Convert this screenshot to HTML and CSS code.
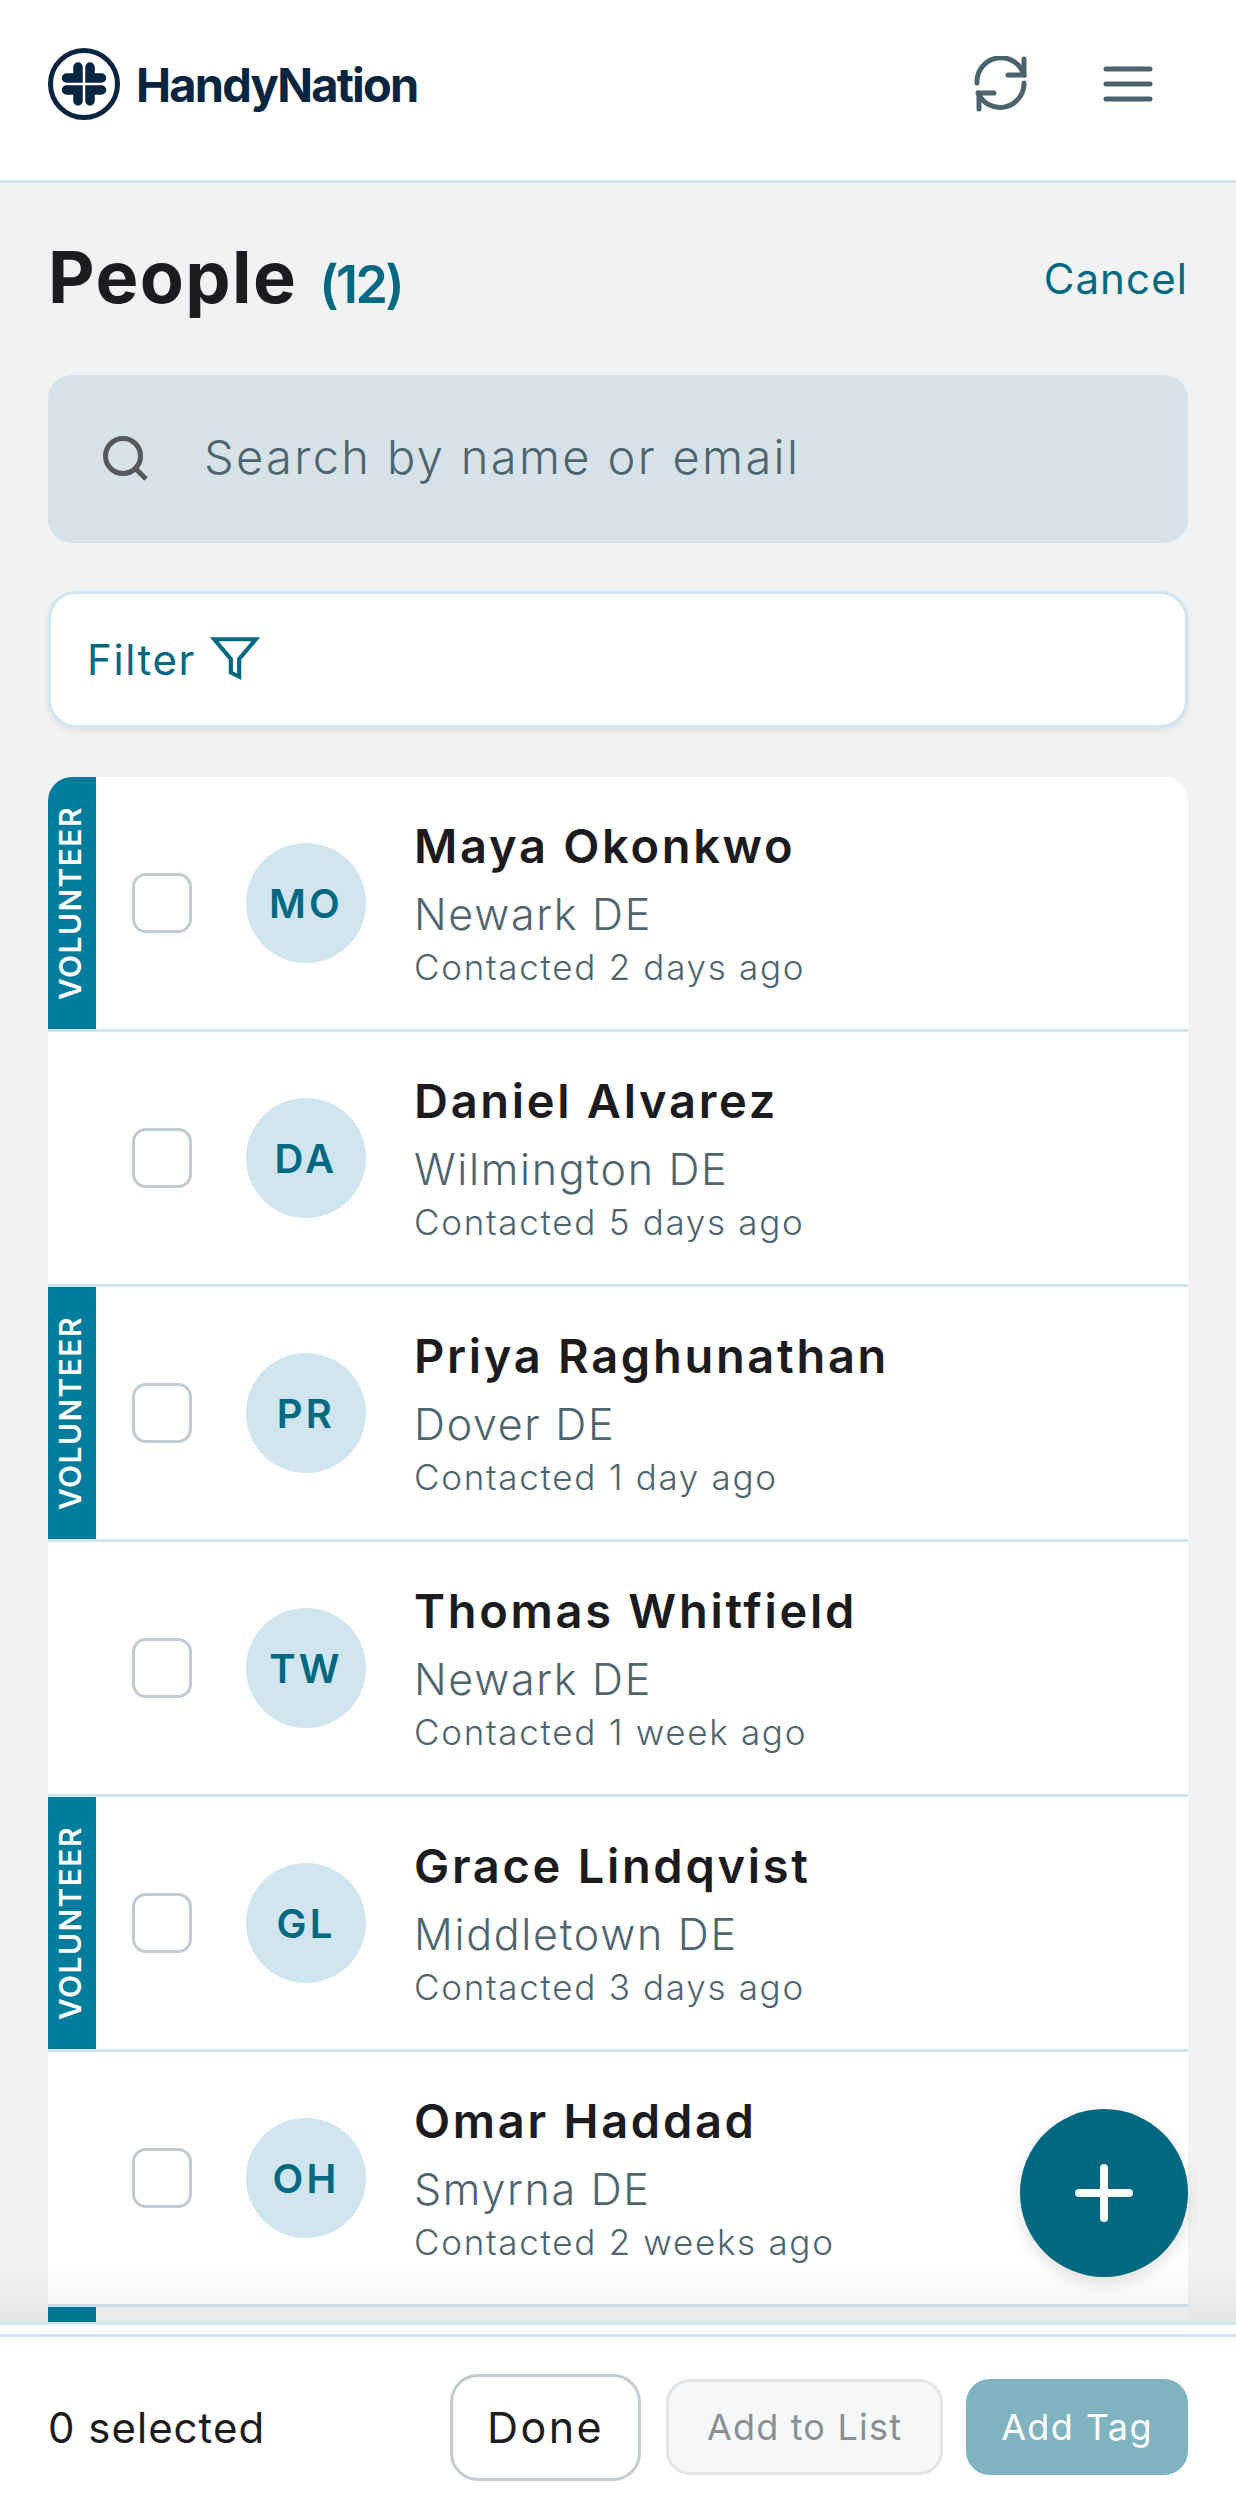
FILE: index.html
```html
<!DOCTYPE html>
<html lang="en">
<head>
    <meta charset="UTF-8">
    <meta name="viewport" content="width=device-width, initial-scale=1.0">
    <title>People - HandyNation</title>
    <link rel="stylesheet" href="styles.css">
</head>
<body>
    <header class="topbar">
        <div class="brand">
            <svg class="brand-mark" viewBox="0 0 72 72" fill="none" stroke="#0a2540">
                <circle cx="36" cy="36" r="33.5" stroke-width="5"/>
                <g stroke-width="9.5" stroke-linecap="round">
                    <path d="M18.5 30H30V19"/>
                    <path d="M53.5 30H42V19"/>
                    <path d="M18.5 42H30V53"/>
                    <path d="M53.5 42H42V53"/>
                </g>
            </svg>
            <span class="brand-name">HandyNation</span>
        </div>
        <div class="topbar-actions">
            <svg class="icon-refresh" viewBox="0 0 56 56" fill="none" stroke="#4c636e" stroke-width="5" stroke-linecap="round">
                <path d="M3 27A24 24 0 0 1 50 19"/>
                <path d="M50 3V19H34"/>
                <path d="M50 27A24 24 0 0 1 4 37"/>
                <path d="M5 53V37H20"/>
            </svg>
            <svg class="icon-menu" viewBox="0 0 50 36" fill="none" stroke="#4c636e" stroke-width="5" stroke-linecap="round">
                <path d="M3 3H47M3 18H47M3 33H47"/>
            </svg>
        </div>
    </header>

    <main class="content">
        <div class="title-row">
            <h1>People</h1>
            <span class="count">(12)</span>
            <a class="cancel">Cancel</a>
        </div>

        <div class="search">
            <svg class="icon-search" viewBox="0 0 46 46" fill="none" stroke="#55595c" stroke-width="5">
                <circle cx="20" cy="20" r="17.5"/>
                <path d="M32 32L43 43"/>
            </svg>
            <span class="search-text">Search by name or email</span>
        </div>

        <div class="filter">
            <span>Filter</span>
            <svg class="icon-filter" viewBox="0 0 24 24" fill="none" stroke="#006880" stroke-width="2">
                <polygon points="22 3 2 3 10 12.46 10 19 14 21 14 12.46 22 3"/>
            </svg>
        </div>

        <div class="list">
            <div class="row">
                <div class="tag">VOLUNTEER</div>
                <div class="check"></div>
                <div class="avatar">MO</div>
                <div class="info">
                    <div class="name">Maya Okonkwo</div>
                    <div class="city">Newark DE</div>
                    <div class="contacted">Contacted 2 days ago</div>
                </div>
            </div>
            <div class="row">
                <div class="tag tag-none"></div>
                <div class="check"></div>
                <div class="avatar">DA</div>
                <div class="info">
                    <div class="name">Daniel Alvarez</div>
                    <div class="city">Wilmington DE</div>
                    <div class="contacted">Contacted 5 days ago</div>
                </div>
            </div>
            <div class="row">
                <div class="tag">VOLUNTEER</div>
                <div class="check"></div>
                <div class="avatar">PR</div>
                <div class="info">
                    <div class="name">Priya Raghunathan</div>
                    <div class="city">Dover DE</div>
                    <div class="contacted">Contacted 1 day ago</div>
                </div>
            </div>
            <div class="row">
                <div class="tag tag-none"></div>
                <div class="check"></div>
                <div class="avatar">TW</div>
                <div class="info">
                    <div class="name">Thomas Whitfield</div>
                    <div class="city">Newark DE</div>
                    <div class="contacted">Contacted 1 week ago</div>
                </div>
            </div>
            <div class="row">
                <div class="tag">VOLUNTEER</div>
                <div class="check"></div>
                <div class="avatar">GL</div>
                <div class="info">
                    <div class="name">Grace Lindqvist</div>
                    <div class="city">Middletown DE</div>
                    <div class="contacted">Contacted 3 days ago</div>
                </div>
            </div>
            <div class="row">
                <div class="tag tag-none"></div>
                <div class="check"></div>
                <div class="avatar">OH</div>
                <div class="info">
                    <div class="name">Omar Haddad</div>
                    <div class="city">Smyrna DE</div>
                    <div class="contacted">Contacted 2 weeks ago</div>
                </div>
            </div>
            <div class="row row-next">
                <div class="tag"></div>
            </div>
        </div>

        <div class="fade"></div>
        <button class="fab">
            <svg viewBox="0 0 58 58" fill="none" stroke="#fff" stroke-width="8" stroke-linecap="round">
                <path d="M29 4V54M4 29H54"/>
            </svg>
        </button>
    </main>

    <footer class="bottombar">
        <div class="bottombar-inner">
            <span class="selected">0 selected</span>
            <div class="bottombar-actions">
                <button class="btn btn-done">Done</button>
                <button class="btn btn-list">Add to List</button>
                <button class="btn btn-tag">Add Tag</button>
            </div>
        </div>
    </footer>
</body>
</html>
```

FILE: styles.css
```css
* {
    box-sizing: border-box;
}
html, body {
    height: 100%;
}
body {
    margin: 0;
    display: flex;
    flex-direction: column;
    overflow: hidden;
    font-family: Inter, "Noto Sans", sans-serif;
    background-color: #f0f2f4;
    color: #1c1c20;
}
.topbar {
    flex: none;
    height: 183px;
    display: flex;
    align-items: center;
    justify-content: space-between;
    padding: 0 83px 12px 48px;
    background-color: white;
    border-bottom: 3px solid #d0e5f0;
}
.brand {
    display: flex;
    align-items: center;
    gap: 16px;
}
.brand-mark {
    width: 72px;
    height: 72px;
}
.brand-name {
    font-size: 47px;
    font-weight: 700;
    letter-spacing: -1.8px;
    color: #0a2540;
}
.topbar-actions {
    display: flex;
    align-items: center;
    gap: 73px;
}
.icon-refresh {
    width: 56px;
    height: 56px;
    display: block;
}
.icon-menu {
    width: 50px;
    height: 36px;
    display: block;
}
.content {
    position: relative;
    flex: 1;
    min-height: 0;
    overflow: hidden;
    padding: 0 48px;
}
.title-row {
    height: 192px;
    display: flex;
    align-items: baseline;
    padding-top: 52px;
}
h1 {
    margin: 0;
    font-size: 72px;
    line-height: 84px;
    font-weight: 700;
    letter-spacing: 1.4px;
}
.count {
    margin-left: 22px;
    font-size: 52px;
    font-weight: 600;
    letter-spacing: -2.6px;
    color: #006880;
}
.cancel {
    align-self: flex-start;
    margin-left: auto;
    margin-top: 18px;
    font-size: 42px;
    letter-spacing: 1.1px;
    color: #006880;
}
.search {
    height: 168px;
    display: flex;
    align-items: center;
    padding-left: 55px;
    background-color: #d6e2e7;
    border-radius: 24px;
}
.icon-search {
    width: 46px;
    height: 46px;
}
.search-text {
    margin-left: 55px;
    padding-bottom: 5px;
    font-size: 47px;
    font-weight: 300;
    letter-spacing: 2.35px;
    color: #4e6570;
}
.filter {
    height: 137px;
    margin-top: 48px;
    display: flex;
    align-items: center;
    gap: 14px;
    padding-left: 36px;
    font-size: 42px;
    letter-spacing: 1.6px;
    color: #006880;
    background-color: white;
    border: 3px solid #d0e5f0;
    border-radius: 28px;
    box-shadow: 0 3px 6px rgba(0,0,0,0.08);
}
.icon-filter {
    width: 50px;
    height: 50px;
    margin-top: -3px;
}
.list {
    margin-top: 49px;
    background-color: white;
    border-radius: 24px 24px 0 0;
    overflow: hidden;
}
.row {
    height: 255px;
    display: flex;
    align-items: center;
    border-bottom: 3px solid #d0e4ef;
}
.row-next {
    background-color: #f4f5f6;
}
.tag {
    width: 48px;
    height: 100%;
    flex: none;
    display: flex;
    align-items: center;
    justify-content: center;
    padding-left: 4px;
    writing-mode: vertical-rl;
    transform: rotate(180deg);
    font-size: 30px;
    font-weight: 600;
    letter-spacing: 1.4px;
    color: white;
    background-color: #007c9c;
}
.tag-none {
    background-color: transparent;
}
.check {
    width: 60px;
    height: 60px;
    flex: none;
    margin-left: 36px;
    border: 3px solid #c0ccd3;
    border-radius: 14px;
}
.avatar {
    width: 120px;
    height: 120px;
    flex: none;
    margin-left: 54px;
    display: flex;
    align-items: center;
    justify-content: center;
    font-size: 40px;
    font-weight: 600;
    letter-spacing: 3.2px;
    color: #006880;
    background-color: #d0e5f0;
    border-radius: 50%;
}
.info {
    margin-left: 48px;
    padding-bottom: 3px;
}
.name {
    font-size: 47px;
    line-height: 60px;
    font-weight: 600;
    letter-spacing: 2.7px;
}
.city {
    margin-top: 5px;
    font-size: 43px;
    line-height: 66px;
    font-weight: 300;
    letter-spacing: 1.7px;
    color: #4e6570;
}
.contacted {
    font-size: 35px;
    line-height: 40px;
    font-weight: 300;
    letter-spacing: 1.7px;
    color: #4e6570;
}
.fade {
    position: absolute;
    left: 0;
    right: 0;
    bottom: 0;
    height: 60px;
    background: linear-gradient(rgba(0,0,0,0), rgba(0,0,0,0.05));
}
.fab {
    position: absolute;
    right: 48px;
    bottom: 45px;
    width: 168px;
    height: 168px;
    display: flex;
    align-items: center;
    justify-content: center;
    padding: 0;
    border: none;
    border-radius: 50%;
    background-color: #006880;
    box-shadow: 0 6px 16px rgba(0,0,0,0.12);
}
.fab svg {
    width: 58px;
    height: 58px;
}
.bottombar {
    flex: none;
    height: 195px;
    padding-top: 9px;
    background-color: white;
    border-top: 3px solid #d0e5f0;
}
.bottombar-inner {
    height: 183px;
    display: flex;
    align-items: center;
    justify-content: space-between;
    padding: 0 48px;
    border-top: 3px solid #d0e5f0;
}
.selected {
    font-size: 42px;
    letter-spacing: 1px;
}
.bottombar-actions {
    display: flex;
    align-items: center;
}
.btn {
    font-family: Inter, "Noto Sans", sans-serif;
    padding: 0;
    border-radius: 24px;
    text-align: center;
}
.btn-done {
    width: 191px;
    height: 107px;
    font-size: 43px;
    letter-spacing: 2.4px;
    color: #1c1c20;
    background-color: white;
    border: 3px solid #c0ccd3;
    border-radius: 28px;
}
.btn-list {
    width: 277px;
    height: 96px;
    margin-left: 25px;
    font-size: 36px;
    letter-spacing: 1.2px;
    color: #8a8f93;
    background-color: #f6f7f9;
    border: 3px solid #e2e5e8;
}
.btn-tag {
    width: 222px;
    height: 96px;
    margin-left: 23px;
    font-size: 36px;
    letter-spacing: 1.4px;
    color: white;
    background-color: #80b3c0;
    border: none;
}
```
